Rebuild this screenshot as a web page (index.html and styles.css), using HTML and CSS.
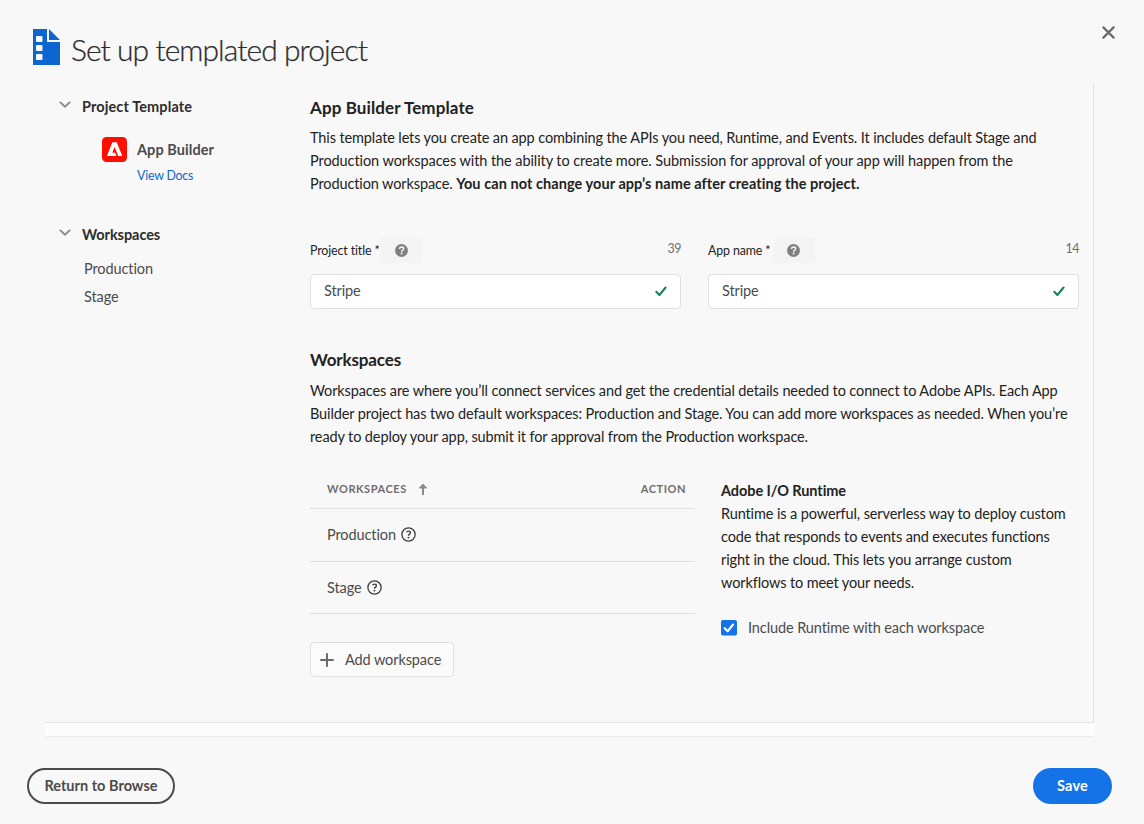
FILE: index.html
```html
<!DOCTYPE html>
<html lang="en">
<head>
<meta charset="utf-8">
<title>Set up templated project</title>
<link rel="stylesheet" href="styles.css">
</head>
<body>
<svg class="defs" width="0" height="0" aria-hidden="true">
  <symbol id="help-solid" viewBox="0 0 13 13">
    <circle cx="6.5" cy="6.5" r="6.5" fill="#808080"/>
    <path d="M4.5 4.9C4.6 3.5 5.4 2.9 6.6 2.9c1.3 0 2.1.7 2.1 1.7 0 1.5-2 1.5-2 3.1" fill="none" stroke="#f5f5f5" stroke-width="1.5"/>
    <circle cx="6.6" cy="9.6" r="1" fill="#f5f5f5"/>
  </symbol>
  <symbol id="help-outline" viewBox="0 0 15 15">
    <circle cx="7.5" cy="7.5" r="6.6" fill="none" stroke="#3c3c3c" stroke-width="1.3"/>
    <path d="M5.6 5.2c.3-.7 1-1.1 1.9-1.1 1.2 0 1.9.7 1.9 1.6 0 1.4-1.9 1.4-1.9 3" fill="none" stroke="#3c3c3c" stroke-width="1.4"/>
    <circle cx="7.5" cy="10.6" r=".95" fill="#3c3c3c"/>
  </symbol>
  <symbol id="check" viewBox="0 0 12 11">
    <path d="M1.3 5.8 4.4 9 10.6 1.5" fill="none" stroke="#12805c" stroke-width="2" stroke-linecap="round" stroke-linejoin="round"/>
  </symbol>
  <symbol id="chevron" viewBox="0 0 12 8">
    <path d="M1.4 1.4 6 5.8 10.6 1.4" fill="none" stroke="#8e8e8e" stroke-width="2" stroke-linecap="round" stroke-linejoin="round"/>
  </symbol>
</svg>

<div class="dialog">
  <header class="header">
    <svg class="project-icon" width="27" height="36" viewBox="0 0 27 36">
      <path d="M0 0h14v13h13v23H0zM16 0l11 11H16z" fill="#0d66d0"/>
      <g fill="#f8f8f8"><rect x="3" y="7" width="6.5" height="6" rx="1"/><rect x="3" y="16" width="6.5" height="6" rx="1"/><rect x="3" y="25" width="6.5" height="6" rx="1"/></g>
    </svg>
    <h1 class="title">Set up templated project</h1>
    <button class="close" aria-label="Close">
      <svg width="13" height="13" viewBox="0 0 13 13"><path d="M1.4 1.4 11.6 11.6M11.6 1.4 1.4 11.6" stroke="#6a6a6a" stroke-width="2.2" stroke-linecap="round"/></svg>
    </button>
  </header>

  <div class="body">
    <nav class="sidebar">
      <div class="group"><svg class="chevron" width="12" height="8"><use href="#chevron"/></svg><span>Project Template</span></div>
      <div class="template">
        <svg width="25" height="25" viewBox="0 0 25 25"><rect width="25" height="25" rx="4.5" fill="#fa0f00"/><path d="M10.4 5.2h4.3l5.6 13.9h-4.1L12.6 9.9 10.3 15.8h2.9l1.2 3.3H4.9z" fill="#fff"/></svg>
        <div class="template-text"><span class="template-name">App Builder</span><a class="docs">View Docs</a></div>
      </div>
      <div class="group second"><svg class="chevron" width="12" height="8"><use href="#chevron"/></svg><span>Workspaces</span></div>
      <ul class="nav-list"><li>Production</li><li>Stage</li></ul>
    </nav>

    <main class="main">
      <h2 class="heading">App Builder Template</h2>
      <p class="text intro">This template lets you create an app combining the APIs you need, Runtime, and Events. It includes default Stage and<br><span class="wide">Production workspaces with the ability to create more. Submission for approval of your app will happen from the</span><br>Production workspace. <b>You can not change your app’s name after creating the project.</b></p>

      <div class="fields">
        <div class="field">
          <div class="field-head"><label class="project-label">Project title *</label><span class="help project-help"><svg width="13" height="13"><use href="#help-solid"/></svg></span><span class="count">39</span></div>
          <div class="input"><span>Stripe</span><svg width="12" height="11"><use href="#check"/></svg></div>
        </div>
        <div class="field">
          <div class="field-head"><label class="app-label">App name *</label><span class="help app-help"><svg width="13" height="13"><use href="#help-solid"/></svg></span><span class="count">14</span></div>
          <div class="input"><span>Stripe</span><svg width="12" height="11"><use href="#check"/></svg></div>
        </div>
      </div>

      <h2 class="heading snug">Workspaces</h2>
      <p class="text about">Workspaces are where you’ll connect services and get the credential details needed to connect to Adobe APIs. Each App<br>Builder project has two default workspaces: Production and Stage. You can add more workspaces as needed. When you’re<br>ready to deploy your app, submit it for approval from the Production workspace.</p>

      <div class="columns">
        <section class="workspaces">
          <div class="table-head">
            <span>WORKSPACES</span>
            <svg class="sort" width="10" height="12" viewBox="0 0 10 12"><path d="M5 11.2V2" stroke="#8a8a8a" stroke-width="2" stroke-linecap="round"/><path d="M1.3 5 5 1.2 8.7 5z" fill="#8a8a8a" stroke="#8a8a8a" stroke-linejoin="round"/></svg>
            <span class="action">ACTION</span>
          </div>
          <div class="row"><span>Production</span><svg width="15" height="15"><use href="#help-outline"/></svg></div>
          <div class="row"><span>Stage</span><svg width="15" height="15"><use href="#help-outline"/></svg></div>
          <button class="add"><svg width="14" height="14" viewBox="0 0 14 14"><path d="M7 1v12M1 7h12" stroke="#6a6a6a" stroke-width="2" stroke-linecap="round"/></svg>Add workspace</button>
        </section>
        <section class="runtime">
          <p class="text"><b class="runtime-title">Adobe I/O Runtime</b><br>Runtime is a powerful, serverless way to deploy custom<br>code that responds to events and executes functions<br>right in the cloud. This lets you arrange custom<br>workflows to meet your needs.</p>
          <div class="option">
            <svg width="16" height="16" viewBox="0 0 16 16"><rect width="16" height="15.5" rx="2" fill="#1473e6"/><path d="M3.7 8.2 6.7 11.3 12 4.5" fill="none" stroke="#fff" stroke-width="2.1" stroke-linecap="round" stroke-linejoin="round"/></svg>
            <span>Include Runtime with each workspace</span>
          </div>
        </section>
      </div>
    </main>
  </div>
  <div class="divider"></div>

  <footer class="footer">
    <button class="btn outline">Return to Browse</button>
    <button class="btn primary">Save</button>
  </footer>
</div>
</body>
</html>
```

FILE: styles.css
```css
* { box-sizing: border-box; }

body {
  margin: 0;
  background: #f8f8f8;
  color: #2c2c2c;
  font-family: Lato, "Noto Sans", sans-serif;
  font-size: 14.5px;
  letter-spacing: -.1px;
  line-height: 23px;
  white-space: nowrap;
}

h1, h2, p, ul { margin: 0; padding: 0; }
button { font: inherit; letter-spacing: inherit; border: 0; background: none; padding: 0; }
svg { display: block; flex: none; }
b { font-weight: 700; letter-spacing: .06px; }
.defs { position: absolute; }

.dialog { width: 1144px; height: 824px; display: flex; flex-direction: column; overflow: hidden; }

.header { display: flex; align-items: flex-start; height: 83px; padding: 26px 29px 0 33px; }
.project-icon { margin-top: 3px; }
.title { margin: 3px 0 0 11px; font-size: 30px; font-weight: 300; letter-spacing: -.96px; line-height: 40px; -webkit-text-stroke: .25px #2c2c2c; }
.close { margin-left: auto; }

.body { display: flex; flex: none; width: 1049px; height: 640px; margin-left: 45px; border-right: 1px solid #e3e3e3; border-bottom: 1px solid #e3e3e3; }
.divider { flex: none; width: 1049px; height: 14px; margin-left: 45px; background: #fcfcfc; border-bottom: 1px solid #ececec; }

.sidebar { flex: none; width: 265px; padding: 12px 0 0 14px; }
.group { display: flex; gap: 11px; font-weight: 700; letter-spacing: .11px; }
.chevron { margin-top: 6px; }
.template { display: flex; gap: 10px; margin: 19px 0 0 43px; }
.template-text { display: flex; flex-direction: column; }
.template-name { font-weight: 700; color: #4b4b4b; line-height: 25px; letter-spacing: .06px; }
.docs { color: #0d66d0; font-size: 12.4px; letter-spacing: -.22px; line-height: 27px; }
.second { margin-top: 34px; letter-spacing: -.06px; }
.nav-list { list-style: none; margin: 9px 0 0 25px; color: #4b4b4b; line-height: 28px; }

.main { flex: none; width: 769px; padding-top: 13px; }
.heading { font-size: 17px; font-weight: 700; letter-spacing: .1px; line-height: 24px; color: #222; }
.snug { letter-spacing: -.14px; }
.text { color: #222; letter-spacing: -.115px; }
.text .wide { letter-spacing: -.08px; }
.intro { margin-top: 6px; }
.about { margin-top: 7px; }

.fields { display: grid; grid-template-columns: 371px 371px; gap: 27px; margin: 43px 0 39px; }
.field-head { display: flex; height: 25px; line-height: 25px; font-size: 12.4px; letter-spacing: -.12px; color: #222; }
.project-label { width: 70px; }
.app-label { width: 65px; }
.help { display: grid; align-items: center; width: 42px; background: #f4f4f4; padding-left: 15px; }
.app-help { padding-left: 14px; }
.count { margin-left: auto; line-height: 21px; color: #6e6e6e; letter-spacing: -.4px; }
.input { display: flex; align-items: center; justify-content: space-between; height: 35px; margin-top: 11px; padding: 0 13px; border: 1px solid #e0e0e0; border-radius: 4px; background: #fff; color: #4b4b4b; }
.input span { padding-bottom: 2px; }

.columns { display: flex; gap: 26px; }
.workspaces { flex: none; width: 385px; padding-top: 22px; }
.table-head { display: flex; height: 39px; padding: 0 9px 0 17px; border-bottom: 1px solid #e0e0e0; color: #6e6e6e; font-size: 11px; font-weight: 700; letter-spacing: .55px; line-height: 37px; }
.sort { margin: 13px 0 0 11px; }
.action { margin-left: auto; }
.row { display: flex; align-items: center; gap: 5px; height: 53px; padding: 0 0 1px 17px; border-bottom: 1px solid #e0e0e0; color: #4b4b4b; }
.row + .row { height: 52px; padding-bottom: 0; }
.add { display: flex; align-items: center; gap: 11px; width: 144px; height: 35px; margin-top: 28px; padding-left: 9px; border: 1px solid #e0e0e0; border-radius: 4px; background: #fbfbfb; color: #4b4b4b; }

.runtime { padding-top: 31px; }
.text .runtime-title { letter-spacing: -.08px; }
.option { display: flex; align-items: center; gap: 11px; margin-top: 22px; color: #4b4b4b; }

.footer { display: flex; justify-content: space-between; padding: 31px 32px 0 27px; }
.btn { height: 36px; padding-bottom: 1px; border-radius: 18px; font-weight: 700; letter-spacing: .02px; }
.outline { width: 148px; border: 2px solid #4b4b4b; color: #4b4b4b; }
.primary { width: 79px; background: #1473e6; color: #fff; letter-spacing: .2px; }
```
